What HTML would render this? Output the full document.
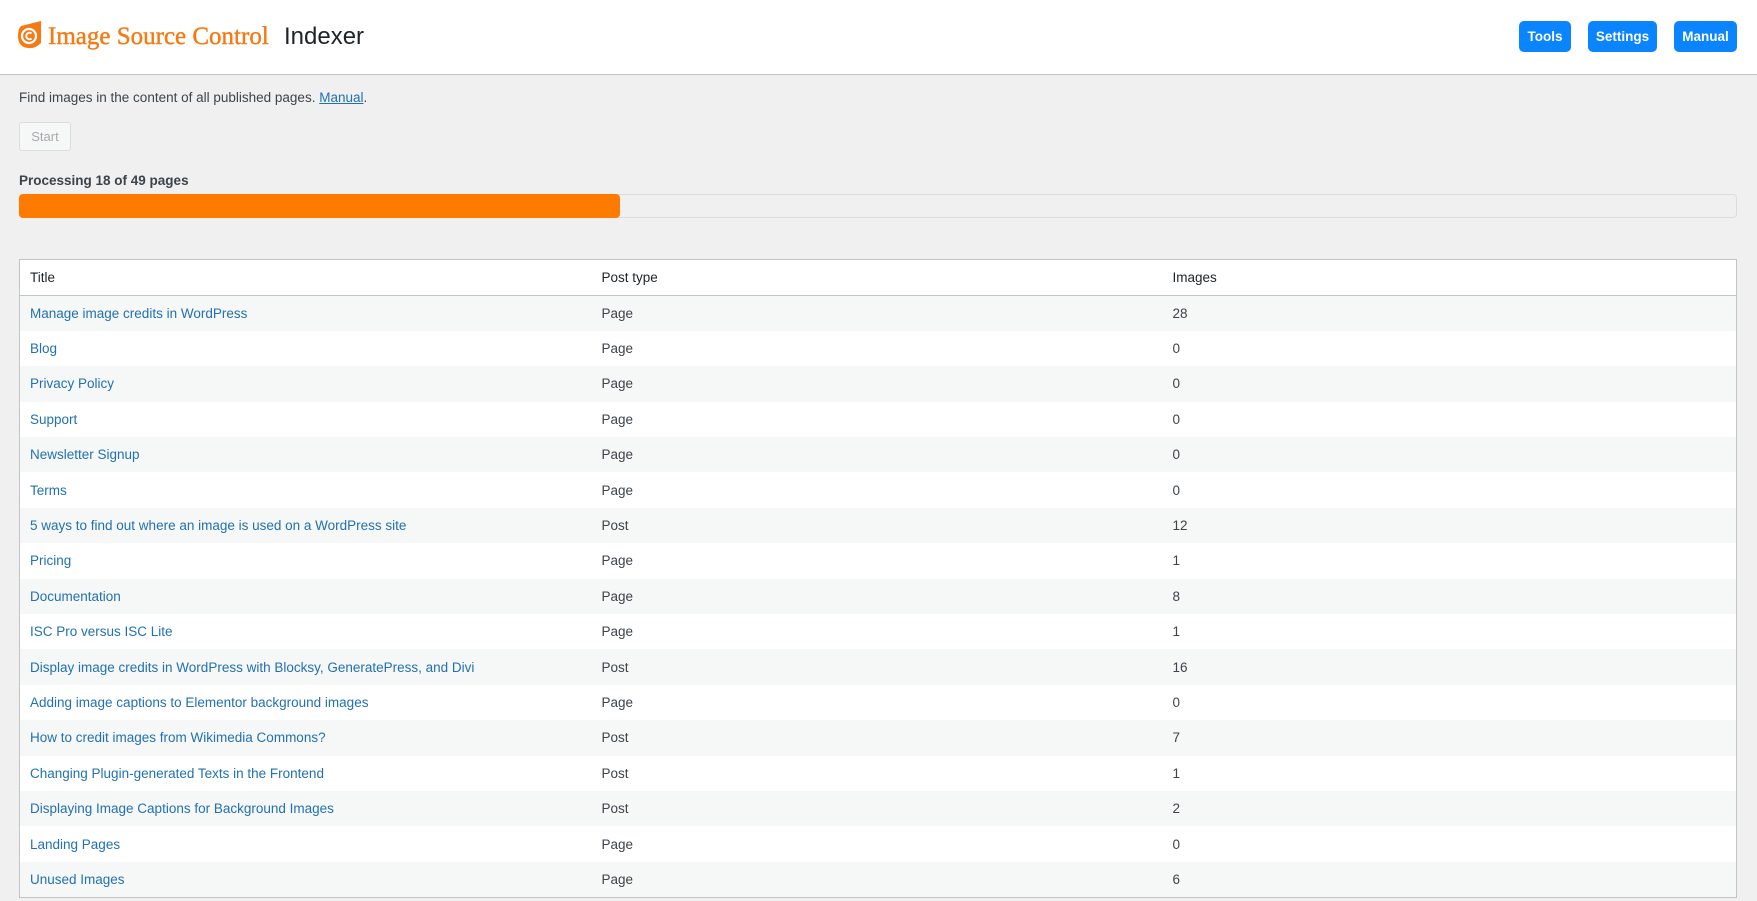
<!DOCTYPE html>
<html><head><meta charset="utf-8"><style>
*{box-sizing:border-box;margin:0;padding:0}
body{width:1757px;height:901px;overflow:hidden;background:#f0f0f1;font-family:"Liberation Sans",sans-serif;color:#3c434a;font-size:13.5px}
.hdr{height:75px;background:#fff;border-bottom:1px solid #c3c4c7;position:relative}
.logo{position:absolute;left:17px;top:21px}
.brand{position:absolute;left:48px;top:23px;font-family:"Liberation Serif",serif;font-size:25px;color:#f67a14;-webkit-text-stroke:0.4px #f67a14}
.idx{position:absolute;left:284px;top:23px;font-size:24px;color:#1d2327}
.btn{position:absolute;top:21px;height:31px;background:#0a84ff;color:#fff;border-radius:5px;font-size:13.5px;font-weight:bold;line-height:31px;text-align:center}
.desc{position:absolute;left:19px;top:90px;font-size:13.5px}
.desc a{color:#2271b1}
.start{position:absolute;left:19px;top:122px;width:52px;height:29px;border:1px solid #dcdcde;background:#f6f7f7;color:#a7aaad;border-radius:3px;line-height:27px;text-align:center;font-size:13px}
.proc{position:absolute;left:19px;top:173px;font-size:13.5px;font-weight:bold;color:#3c434a}
.track{position:absolute;left:19px;top:194px;width:1718px;height:24px;border:1px solid #dcdcde;border-radius:4px;background:#f0f0f1}
.bar{position:absolute;left:19px;top:194px;width:601px;height:24px;background:#ff7b00;border-radius:4px}
table{position:absolute;left:19px;top:259px;width:1718px;border:1px solid #c3c4c7;border-collapse:collapse;background:#fff}
th{text-align:left;font-weight:normal;color:#1d2327;height:36px;border-bottom:1px solid #c3c4c7;padding-left:10px;font-size:13.5px}
td{height:35.4px;padding-left:10px;font-size:13.5px}
tr:nth-child(even) td{background:#f6f7f7}
td a{color:#2271b1;text-decoration:none}
</style></head><body>
<div class="hdr">
<svg class="logo" width="26" height="28" viewBox="0 0 26 28"><path d="M4 5 L24 0 L24 22 Q18 28 11 27 Q1 26 1 15 Q1 8 4 5Z" fill="#f67a14"/><circle cx="12" cy="15" r="7" fill="none" stroke="#fff" stroke-width="2.2"/><path d="M14.5 12.5 A3.2 3.2 0 1 0 14.5 17.5" fill="none" stroke="#fff" stroke-width="2"/></svg>
<div class="brand">Image Source Control</div>
<div class="idx">Indexer</div>
<div class="btn" style="left:1519px;width:52px">Tools</div>
<div class="btn" style="left:1588px;width:69px">Settings</div>
<div class="btn" style="left:1674px;width:63px">Manual</div>
</div>
<div class="desc">Find images in the content of all published pages. <a href="#">Manual</a>.</div>
<div class="start">Start</div>
<div class="proc">Processing 18 of 49 pages</div>
<div class="track"></div><div class="bar"></div>
<table>
<tr><th style="width:572px">Title</th><th style="width:571px">Post type</th><th>Images</th></tr>
<tr><td><a href="#">Manage image credits in WordPress</a></td><td>Page</td><td>28</td></tr>
<tr><td><a href="#">Blog</a></td><td>Page</td><td>0</td></tr>
<tr><td><a href="#">Privacy Policy</a></td><td>Page</td><td>0</td></tr>
<tr><td><a href="#">Support</a></td><td>Page</td><td>0</td></tr>
<tr><td><a href="#">Newsletter Signup</a></td><td>Page</td><td>0</td></tr>
<tr><td><a href="#">Terms</a></td><td>Page</td><td>0</td></tr>
<tr><td><a href="#">5 ways to find out where an image is used on a WordPress site</a></td><td>Post</td><td>12</td></tr>
<tr><td><a href="#">Pricing</a></td><td>Page</td><td>1</td></tr>
<tr><td><a href="#">Documentation</a></td><td>Page</td><td>8</td></tr>
<tr><td><a href="#">ISC Pro versus ISC Lite</a></td><td>Page</td><td>1</td></tr>
<tr><td><a href="#">Display image credits in WordPress with Blocksy, GeneratePress, and Divi</a></td><td>Post</td><td>16</td></tr>
<tr><td><a href="#">Adding image captions to Elementor background images</a></td><td>Page</td><td>0</td></tr>
<tr><td><a href="#">How to credit images from Wikimedia Commons?</a></td><td>Post</td><td>7</td></tr>
<tr><td><a href="#">Changing Plugin-generated Texts in the Frontend</a></td><td>Post</td><td>1</td></tr>
<tr><td><a href="#">Displaying Image Captions for Background Images</a></td><td>Post</td><td>2</td></tr>
<tr><td><a href="#">Landing Pages</a></td><td>Page</td><td>0</td></tr>
<tr><td><a href="#">Unused Images</a></td><td>Page</td><td>6</td></tr>
</table>
</body></html>
